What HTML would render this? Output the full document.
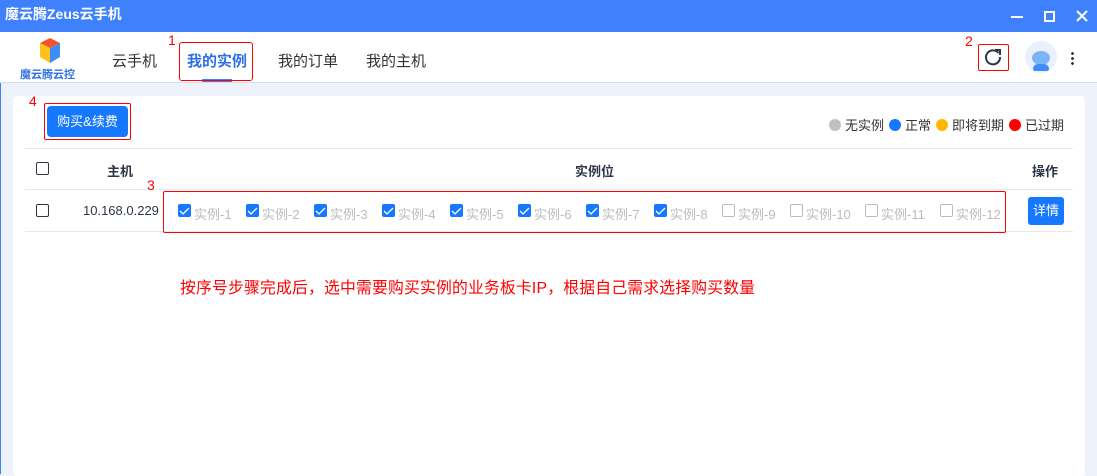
<!DOCTYPE html>
<html><head><meta charset="utf-8"><style>
*{margin:0;padding:0;box-sizing:border-box}
body{width:1097px;height:474px;overflow:hidden;background:#eef2fb;font-family:"Liberation Sans","Noto Sans CJK SC",sans-serif;position:relative}
.a{position:absolute}
.title{left:0;top:0;width:1097px;height:32px;background:#3f80fd;color:#fff;font-weight:bold;font-size:14px;line-height:28px;padding-left:5px}
.hdr{left:0;top:32px;width:1097px;height:51px;background:#fff;border-bottom:1px solid #d8dde8}
.nav{font-size:15px;color:#333;top:50px}
.card{left:13px;top:96px;width:1072px;height:380px;background:#fff;border-radius:4px}
.cb{width:13px;height:13px;border:1.5px solid #2d3748;border-radius:2px}
.ib{width:13px;height:13px;border-radius:2px;background:#1677ff}
.ie{width:13px;height:13px;border-radius:2px;border:1px solid #bbb}
.it{font-size:13px;color:#bbb;top:204px}
.red{border:1px solid #f00}
.rn{color:#f00;font-size:14px}
.line{height:1px;background:#e4e7ee;left:25px;width:1048px}
.dot{display:inline-block;width:12px;height:12px;border-radius:50%;vertical-align:-1px;margin:0 4px 0 5px}
</style></head><body>
<div class="a" style="left:0;top:0;width:1px;height:474px;background:#3f80fd"></div>
<div class="a title">魔云腾Zeus云手机</div>
<div class="a" style="left:1011px;top:16px;width:12px;height:2px;background:#fff"></div>
<div class="a" style="left:1044px;top:11px;width:11px;height:11px;border:2px solid #fff"></div>
<svg class="a" style="left:1076px;top:10px" width="12" height="12"><path d="M1 1L11 11M11 1L1 11" stroke="#fff" stroke-width="2"/></svg>
<div class="a hdr"></div>
<svg class="a" style="left:36px;top:37px" width="27" height="28" viewBox="0 0 27 28"><polygon points="4,6 14,1 24,6 14,11" fill="#f5522a"/><polygon points="4,6 14,11 14,26 4,20" fill="#ffc21a"/><polygon points="14,11 24,6 24,20 14,26" fill="#3a8ef5"/></svg>
<div class="a" style="left:20px;top:66px;font-size:11px;font-weight:bold;color:#2f6fe8">魔云腾云控</div>
<div class="a nav" style="left:112px">云手机</div>
<div class="a nav" style="left:187px;color:#2f6fe8;font-weight:bold">我的实例</div>
<div class="a" style="left:202px;top:79px;width:30px;height:3px;background:#3f80fd"></div>
<div class="a red" style="left:179px;top:42px;width:74px;height:39px;border-radius:3px"></div>
<div class="a rn" style="left:168px;top:32px">1</div>
<div class="a nav" style="left:278px">我的订单</div>
<div class="a nav" style="left:366px">我的主机</div>
<div class="a rn" style="left:965px;top:33px">2</div>
<div class="a red" style="left:978px;top:44px;width:31px;height:27px;border-radius:2px"></div>
<svg class="a" style="left:983px;top:47px" width="20" height="20" viewBox="0 0 20 20"><path d="M15.5 6 A7 7 0 1 0 17 10" fill="none" stroke="#2d3748" stroke-width="2"/><path d="M12 3 L17 3 L17 8" fill="none" stroke="#2d3748" stroke-width="2"/></svg>
<div class="a" style="left:1025px;top:41px;width:32px;height:32px;border-radius:50%;background:#eaf1fd"></div>
<div class="a" style="left:1032px;top:51px;width:18px;height:14px;border-radius:50%;background:#7fb3f7"></div>
<div class="a" style="left:1033px;top:64px;width:16px;height:7px;border-radius:7px 7px 3px 3px;background:#3f8ef5"></div>
<div class="a" style="left:1071px;top:51px;width:3px;height:14px;background:radial-gradient(circle,#2d3748 1.3px,transparent 1.5px) 0 0/3px 5px"></div>
<div class="a card"></div>
<div class="a rn" style="left:29px;top:93px">4</div>
<div class="a red" style="left:44px;top:103px;width:87px;height:37px;border-radius:2px"></div>
<div class="a" style="left:47px;top:106px;width:81px;height:31px;background:#1677ff;border-radius:4px;color:#fff;font-size:13px;line-height:31px;text-align:center">购买&amp;续费</div>
<div class="a" style="left:824px;top:115px;font-size:13px;color:#333;white-space:nowrap"><span class="dot" style="background:#c0c0c0"></span>无实例<span class="dot" style="background:#1677ff"></span>正常<span class="dot" style="background:#ffb800"></span>即将到期<span class="dot" style="background:#f00"></span>已过期</div>
<div class="a line" style="top:148px"></div>
<div class="a line" style="top:189px"></div>
<div class="a line" style="top:231px"></div>
<div class="a cb" style="left:36px;top:162px"></div>
<div class="a" style="left:107px;top:161px;font-size:13px;font-weight:bold;color:#2d3748">主机</div>
<div class="a" style="left:575px;top:161px;font-size:13px;font-weight:bold;color:#2d3748">实例位</div>
<div class="a" style="left:1032px;top:161px;font-size:13px;font-weight:bold;color:#2d3748">操作</div>
<div class="a cb" style="left:36px;top:204px"></div>
<div class="a" style="left:83px;top:203px;font-size:13px;color:#2d3748">10.168.0.229</div>
<div class="a rn" style="left:147px;top:177px">3</div>
<div class="a red" style="left:163px;top:191px;width:843px;height:42px;border-radius:2px"></div>
<div class="a ib" style="left:178px;top:204px"></div><div class="a it" style="left:194px">实例-1</div>
<div class="a ib" style="left:246px;top:204px"></div><div class="a it" style="left:262px">实例-2</div>
<div class="a ib" style="left:314px;top:204px"></div><div class="a it" style="left:330px">实例-3</div>
<div class="a ib" style="left:382px;top:204px"></div><div class="a it" style="left:398px">实例-4</div>
<div class="a ib" style="left:450px;top:204px"></div><div class="a it" style="left:466px">实例-5</div>
<div class="a ib" style="left:518px;top:204px"></div><div class="a it" style="left:534px">实例-6</div>
<div class="a ib" style="left:586px;top:204px"></div><div class="a it" style="left:602px">实例-7</div>
<div class="a ib" style="left:654px;top:204px"></div><div class="a it" style="left:670px">实例-8</div>
<div class="a ie" style="left:722px;top:204px"></div><div class="a it" style="left:738px">实例-9</div>
<div class="a ie" style="left:790px;top:204px"></div><div class="a it" style="left:806px">实例-10</div>
<div class="a ie" style="left:865px;top:204px"></div><div class="a it" style="left:881px">实例-11</div>
<div class="a ie" style="left:940px;top:204px"></div><div class="a it" style="left:956px">实例-12</div>
<div class="a" style="left:1028px;top:197px;width:36px;height:28px;background:#1677ff;border-radius:3px;color:#fff;font-size:13px;line-height:28px;text-align:center">详情</div>
<div class="a" style="left:180px;top:275px;font-size:15.8px;color:#f00;white-space:nowrap;letter-spacing:0.2px">按序号步骤完成后，选中需要购买实例的业务板卡IP，根据自己需求选择购买数量</div>
<svg class="a" style="left:0;top:0" width="1097" height="474"><g fill="none" stroke="#fff" stroke-width="1.3"><path d="M180 211l3 3 6-6"/><path d="M248 211l3 3 6-6"/><path d="M316 211l3 3 6-6"/><path d="M384 211l3 3 6-6"/><path d="M452 211l3 3 6-6"/><path d="M520 211l3 3 6-6"/><path d="M588 211l3 3 6-6"/><path d="M656 211l3 3 6-6"/></g></svg>
</body></html>
